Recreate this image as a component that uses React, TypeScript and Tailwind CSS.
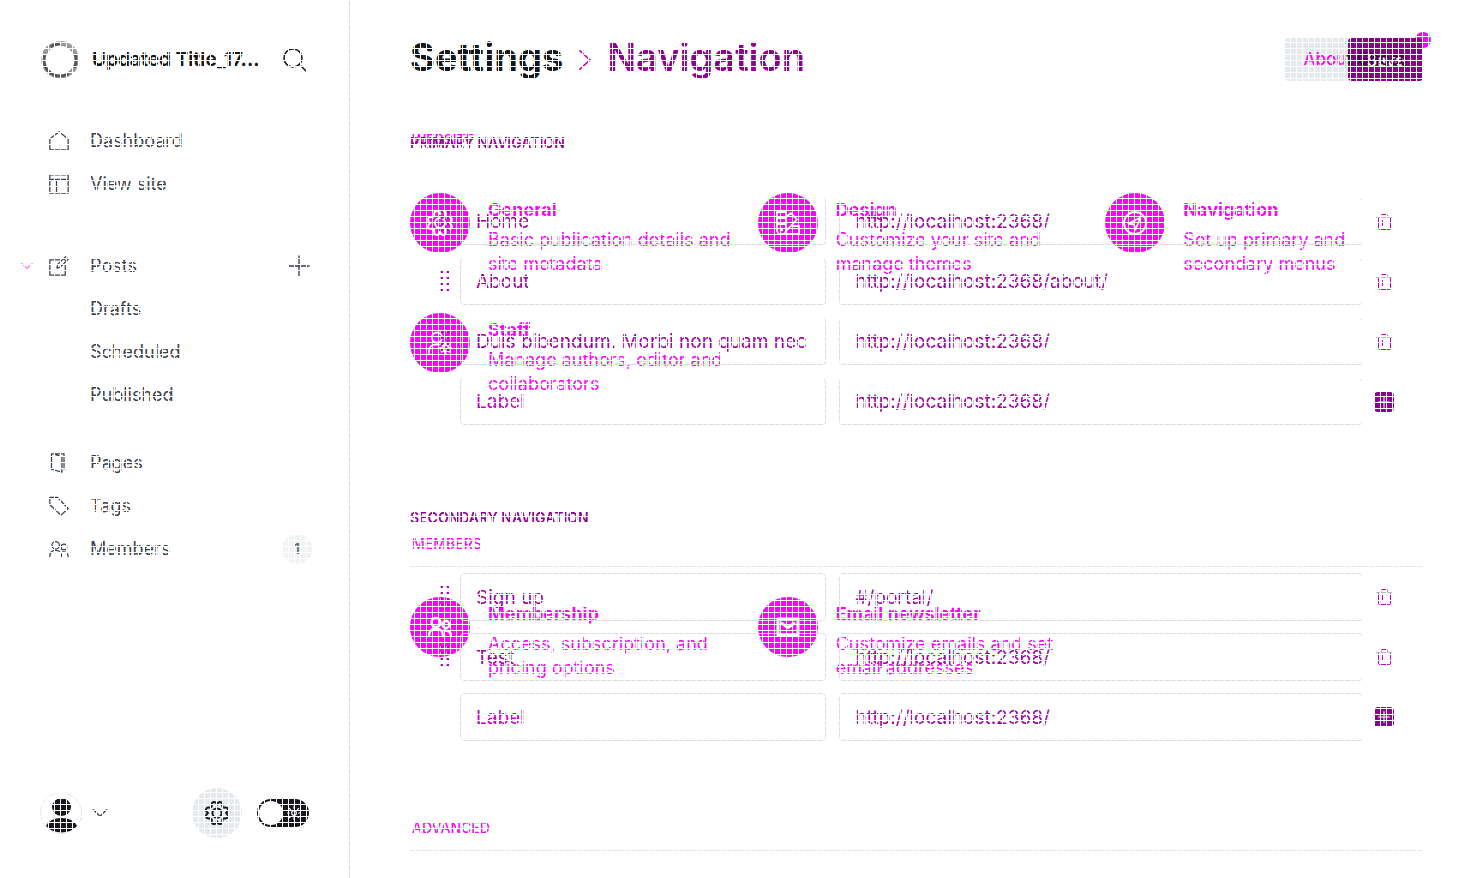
import React from 'react';

type IconProps = { className?: string };

function Svg({ className, children, box = 24, width = 1.5 }: { className?: string; children: React.ReactNode; box?: number; width?: number }) {
  return (
    <svg aria-hidden="true" viewBox={`0 0 ${box} ${box}`} fill="none" stroke="currentColor" strokeWidth={width} strokeLinecap="round" strokeLinejoin="round" className={className}>
      {children}
    </svg>
  );
}

const HomeIcon = ({ className }: IconProps) => (
  <Svg className={className}><path d="M1 9.5 12 1l11 8.5V22.5H1Z" /></Svg>
);
const LayoutIcon = ({ className }: IconProps) => (
  <Svg className={className}><path d="M1 1h22v22H1ZM1 6.500h22M9 6.500V23" /></Svg>
);
const WriteIcon = ({ className }: IconProps) => (
  <Svg className={className}>
    <path d="M13 4.500H1V23h18.500V11" />
    <path d="m9.500 14.500 1-4.500L20 .900l3 3-9.300 9.400ZM17.500 3.200l3 3" />
  </Svg>
);
const PagesIcon = ({ className }: IconProps) => (
  <Svg className={className}>
    <path d="M3 1h15v18.500M3 1v18.500L15.500 23V5L8 2" />
    <path d="M18 4.500h3v15h-5" stroke="#c5c8cb" />
  </Svg>
);
const TagIcon = ({ className }: IconProps) => (
  <Svg className={className}><path d="M1 1.500h9L23 15l-8.500 8L1 10.500Z" /></Svg>
);
const MembersIcon = ({ className, strokeWidth = 1.5 }: IconProps & { strokeWidth?: number }) => (
  <Svg className={className} width={strokeWidth}>
    <circle cx="8" cy="7.500" r="4.500" />
    <circle cx="18" cy="9.500" r="3.500" />
    <path d="M1 21c0-5 3-7.500 7-7.500s7 2.500 7 7.500M16.500 15.500c4 0 6.500 2 6.500 5.500" />
  </Svg>
);
const SearchIcon = ({ className }: IconProps) => (
  <Svg className={className}><circle cx="10" cy="10" r="9" /><path d="m16.500 16.500 6.500 6.500" /></Svg>
);
const ChevronDown = ({ className }: IconProps) => (
  <Svg className={className} width={2}><path d="m2 7 10 10L22 7" /></Svg>
);
const ChevronRight = ({ className }: IconProps) => (
  <Svg className={className} width={2}><path d="m6 1 12 11L6 23" /></Svg>
);
const PlusIcon = ({ className, strokeWidth = 1.5 }: IconProps & { strokeWidth?: number }) => (
  <Svg className={className} width={strokeWidth}><path d="M12 1v22M1 12h22" /></Svg>
);
const GearIcon = ({ className, strokeWidth = 2 }: IconProps & { strokeWidth?: number }) => (
  <Svg className={className} width={strokeWidth}>
    <circle cx="12" cy="12" r="4.600" />
    <path d="M12 3.800 Q12.800 1 15 1 Q17.600 1.200 17.300 4.200 L17.300 5.600 L19 6.700 Q22.300 6 23 8.300 Q23.400 10.200 21 12 Q23.400 13.800 23 15.700 Q22.300 18 19 17.300 L17.300 18.400 L17.300 19.800 Q17.600 22.800 15 23 Q12.800 23 12 20.200 Q11.200 23 9 23 Q6.400 22.800 6.700 19.800 L6.700 18.400 L5 17.300 Q1.700 18 1 15.700 Q.600 13.800 3 12 Q.600 10.200 1 8.300 Q1.700 6 5 6.700 L6.700 5.600 L6.700 4.200 Q6.400 1.200 9 1 Q11.200 1 12 3.800 Z" />
  </Svg>
);
const DesignIcon = ({ className }: IconProps) => (
  <Svg className={className} width={1.8}>
    <path d="M1 1h9v18a4.500 4.500 0 0 1-9 0ZM1 7h9M1 13h9M10 6l5-4 6 6.500L10 20M6 23h17v-8h-7" />
    <circle cx="5.500" cy="18.500" r=".8" />
  </Svg>
);
const CompassIcon = ({ className }: IconProps) => (
  <Svg className={className} width={1.8}>
    <circle cx="12" cy="12" r="11" />
    <path d="m5.500 12.500 12-6-5 12-1.500-5Z" />
  </Svg>
);
const StaffIcon = ({ className }: IconProps) => (
  <Svg className={className} width={1.8}>
    <circle cx="9" cy="6.500" r="5" />
    <path d="M1 22v-2c0-4 3-6.500 7-6.500h3" />
    <circle cx="17.500" cy="17" r="3" />
    <path d="M17.500 11.500v2M17.500 20.500v2M12 17h2M21 17h2M13.600 13.100l1.500 1.500M20 19.500l1.400 1.400M21.400 13.100 20 14.500M15 19.500l-1.400 1.400" />
  </Svg>
);
const MailIcon = ({ className }: IconProps) => (
  <Svg className={className} width={3}><path d="M2 4h20v16H2ZM6 8.500l6 4 6-4" /></Svg>
);
const TrashIcon = ({ className }: IconProps) => (
  <Svg className={className} box={16} width={1}>
    <path d="M.5 3.500h15M5.500 3.500v-2q0-1 1-1h3.500q1 0 1 1v2" stroke="#bdbdbd" />
    <path d="M2.500 4.500v10q0 1 1 1h10q1 0 1-1v-10M6.500 6.500v5M6 .5h5v2" stroke="#bf00bf" />
  </Svg>
);
const HandleIcon = ({ className }: IconProps) => (
  <svg aria-hidden="true" viewBox="0 0 10 20" className={className}>
    {[0, 6, 12, 18].map((y) => (
      <React.Fragment key={y}>
        <path d={`M0 ${y}h3v2h-3ZM6 ${y}h3v2h-3Z`} fill="#bfbfbf" />
        <path d={`M1 ${y}h2v2h-2ZM7 ${y}h2v2h-2Z`} fill="#b800b8" />
      </React.Fragment>
    ))}
  </svg>
);

function NavItem({ icon, label, children }: { icon?: React.ReactNode; label: string; children?: React.ReactNode }) {
  return (
    <li className="flex h-[43px] items-center pr-[37px]">
      <a href="#" className="flex flex-1 items-center gap-5 pl-12">
        <span className="flex w-[22px] justify-center">{icon}</span>
        <span>{label}</span>
      </a>
      {children}
    </li>
  );
}

function Sidebar() {
  return (
    <aside className="flex w-[350px] shrink-0 flex-col border-r border-[#dddfe1] text-[#394047]">
      <header className="flex h-[119px] items-center pl-10 pr-[42px]">
        <svg aria-hidden="true" viewBox="0 0 40 40" className="size-10 shrink-0" fill="none">
          <circle cx="20" cy="20" r="16.500" stroke="#555" strokeWidth="4" />
          <circle cx="20" cy="20" r="18" stroke="#aaa" strokeWidth="1" />
          <path d="M20 3a17 17 0 0 1 16 11M35 28a17 17 0 0 1-6 6M4 15a17 17 0 0 1 6-9" stroke="#999" strokeWidth="4" />
        </svg>
        <h2 className="ml-3 flex-1 pt-0.5 whitespace-nowrap text-[19px] font-bold text-[#15171a]">Updated Title_17...</h2>
        <button aria-label="Search" className="text-[#15171a]"><SearchIcon className="size-6" /></button>
      </header>
      <nav className="text-lg">
        <ul>
          <NavItem icon={<HomeIcon className="size-5" />} label="Dashboard" />
          <NavItem icon={<LayoutIcon className="size-5" />} label="View site" />
        </ul>
        <ul className="relative mt-[39px]">
          <NavItem icon={<WriteIcon className="size-5" />} label="Posts">
            <button aria-label="New post" className="mr-0.5"><PlusIcon className="size-[22px]" /></button>
          </NavItem>
          <NavItem label="Drafts" />
          <NavItem label="Scheduled" />
          <NavItem label="Published" />
          <button aria-label="Collapse posts" className="absolute left-[21px] top-4 text-[#ff00ff]"><ChevronDown className="size-3" /></button>
        </ul>
        <ul className="mt-[25px]">
          <NavItem icon={<PagesIcon className="size-5" />} label="Pages" />
          <NavItem icon={<TagIcon className="size-5" />} label="Tags" />
          <NavItem icon={<MembersIcon className="size-5" />} label="Members">
            <span className="flex size-[30px] items-center justify-center rounded-full bg-[#f0f2f3] text-sm font-semibold text-[#5d6a75]">1</span>
          </NavItem>
        </ul>
      </nav>
      <footer className="mt-auto flex items-center px-10 pb-10">
        <button aria-label="Account" className="flex items-center gap-2.5">
          <svg viewBox="0 0 42 42" className="size-[42px]">
            <circle cx="21" cy="21" r="20.500" fill="#fff" stroke="#e3e5e7" />
            <ellipse cx="21.500" cy="15" rx="9.500" ry="9" fill="#15171a" />
            <path d="M6 34q4-8 15.500-8t15.500 8q-6 6.500-15.500 6.500T6 34Z" fill="#15171a" />
          </svg>
          <ChevronDown className="size-4" />
        </button>
        <button aria-label="Settings" className="ml-auto flex size-[50px] items-center justify-center rounded-full bg-[#e6e9eb] text-[#15171a]"><GearIcon className="size-6" /></button>
        <button role="switch" aria-checked="false" aria-label="Dark mode" className="ml-[15px] flex h-7 w-[52px] items-center justify-between rounded-full bg-[#15171a] pl-0.5 pr-2 text-white">
          <span className="size-6 rounded-full bg-white" />
          <Svg className="size-3.5" width={2}>
            <circle cx="12" cy="12" r="4" />
            <path d="M12 1v3M12 20v3M1 12h3M20 12h3M4 4l2 2M18 18l2 2M20 4l-2 2M4 20l2-2" />
          </Svg>
        </button>
      </footer>
    </aside>
  );
}

function Card({ icon, title, text }: { icon: React.ReactNode; title: string; text: string }) {
  return (
    <a href="#" className="flex h-[90px] gap-[18px] pr-5">
      <span className="flex size-[60px] shrink-0 items-center justify-center rounded-full bg-[#ff00ff] text-white">{icon}</span>
      <span className="pt-[5px]">
        <span className="block text-lg leading-6 font-bold">{title}</span>
        <span className="mt-1.5 block text-lg leading-6">{text}</span>
      </span>
    </a>
  );
}

function Overview() {
  const heading = 'h-[43px] border-b border-[#e3e5e7] pt-2.5 pl-0.5 text-sm leading-5 font-medium';
  const cards = '-mr-[30px] grid grid-cols-3 gap-y-[30px] pt-[30px]';
  return (
    <div className="col-start-1 row-start-1 text-[#ff00ff]">
      <section>
        <h4 className={heading}>WEBSITE</h4>
        <div className={cards}>
          <Card icon={<GearIcon className="size-[26px]" strokeWidth={1.8} />} title="General" text="Basic publication details and site metadata" />
          <Card icon={<DesignIcon className="size-6" />} title="Design" text="Customize your site and manage themes" />
          <Card icon={<CompassIcon className="size-6" />} title="Navigation" text="Set up primary and secondary menus" />
          <Card icon={<StaffIcon className="size-6" />} title="Staff" text="Manage authors, editor and collaborators" />
        </div>
      </section>
      <section className="mt-[121px]">
        <h4 className={heading}>MEMBERS</h4>
        <div className={cards}>
          <Card icon={<MembersIcon className="size-6" strokeWidth={2.4} />} title="Membership" text="Access, subscription, and pricing options" />
          <Card icon={<MailIcon className="size-6" />} title="Email newsletter" text="Customize emails and set email addresses" />
        </div>
      </section>
      <section className="mt-[121px]">
        <h4 className={heading}>ADVANCED</h4>
      </section>
    </div>
  );
}

type Link = { label: string; url: string; isNew?: boolean };

const primary: Link[] = [
  { label: 'Home', url: 'http://localhost:2368/' },
  { label: 'About', url: 'http://localhost:2368/about/' },
  { label: 'Duis bibendum. Morbi non quam nec dui luctus', url: 'http://localhost:2368/' },
  { label: '', url: 'http://localhost:2368/', isNew: true },
];
const secondary: Link[] = [
  { label: 'Sign up', url: '#/portal/' },
  { label: 'Test', url: 'http://localhost:2368/' },
  { label: '', url: 'http://localhost:2368/', isNew: true },
];

function LinkRow({ link, fieldClass }: { link: Link; fieldClass: string }) {
  return (
    <li className="flex h-[60px] items-start pl-[50px] pr-[29px]">
      <div className="relative grid flex-1 grid-cols-[7fr_10fr] gap-[13px]">
        {!link.isNew && (
          <button type="button" aria-label="Reorder" className="absolute top-[13px] -left-5">
            <HandleIcon className="h-5 w-2.5" />
          </button>
        )}
        <input aria-label="Label" placeholder="Label" defaultValue={link.label} className={fieldClass} />
        <input aria-label="URL" defaultValue={link.url} className={fieldClass} />
      </div>
      <div className="ml-[11px] flex h-[47px] w-5 items-center justify-center">
        {link.isNew ? (
          <button type="button" aria-label="Add" className="flex size-5 items-center justify-center rounded-sm bg-[#900090] text-white">
            <PlusIcon className="size-3" strokeWidth={2} />
          </button>
        ) : (
          <button type="button" aria-label="Delete"><TrashIcon className="size-4" /></button>
        )}
      </div>
    </li>
  );
}

function NavigationForm() {
  const field = 'min-w-0 rounded-[4px] border border-[#dddddd] bg-transparent px-[15px] text-[19px] text-[#a000a0] outline-none placeholder:text-[#c200c2]';
  return (
    <form className="relative col-start-1 row-start-1" onSubmit={(e) => e.preventDefault()}>
      <section>
        <h4 className="pt-[13px] text-sm leading-5 font-semibold text-[#900090]">PRIMARY NAVIGATION</h4>
        <ul className="mt-[45px]">
          {primary.map((link, i) => <LinkRow key={i} link={link} fieldClass={`h-[47px] ${field}`} />)}
        </ul>
      </section>
      <section className="mt-[70px]">
        <h4 className="text-sm leading-5 font-semibold text-[#900090]">SECONDARY NAVIGATION</h4>
        <ul className="mt-[45px]">
          {secondary.map((link, i) => <LinkRow key={i} link={link} fieldClass={`h-12 ${field}`} />)}
        </ul>
      </section>
    </form>
  );
}

export default function App() {
  return (
    <div className="relative flex h-screen overflow-hidden bg-white font-['Inter','Liberation_Sans',sans-serif]">
      <Sidebar />
      <main className="min-w-0 flex-1 px-[60px]">
        <header className="mb-0.5 flex h-[118px] items-center justify-between">
          <h1 className="flex items-center pb-1 text-[38px] leading-none font-bold text-[#15171a]">
            <a href="#">Settings</a>
            <ChevronRight className="mx-3 mt-1.5 size-5 text-[#c000c0]" />
            <span className="font-semibold text-[#900090]">Navigation</span>
          </h1>
          <div className="relative">
            <span className="absolute -top-1.5 -right-2 size-4 rounded-full bg-[#ff00ff]" />
            <div className="relative grid h-[43px] rounded-[4px] bg-[#e6e9eb]">
              <button className="col-start-1 row-start-1 w-[75px] justify-self-end rounded-[4px] bg-[#8b008b] pt-0.5 text-base font-medium text-white">Save</button>
              <button className="relative col-start-1 row-start-1 px-[18px] pt-0.5 text-[17px] font-medium text-[#2b1030]"><span className="text-[#ff00ff]">Abou</span>t Ghost</button>
            </div>
          </div>
        </header>
        <div className="grid">
          <Overview />
          <NavigationForm />
        </div>
      </main>
      <div aria-hidden="true" className="pointer-events-none absolute inset-0 bg-[linear-gradient(to_right,#fff_1px,transparent_1px),linear-gradient(to_bottom,#fff_1px,transparent_1px)] bg-[length:6px_6px]" />
    </div>
  );
}
